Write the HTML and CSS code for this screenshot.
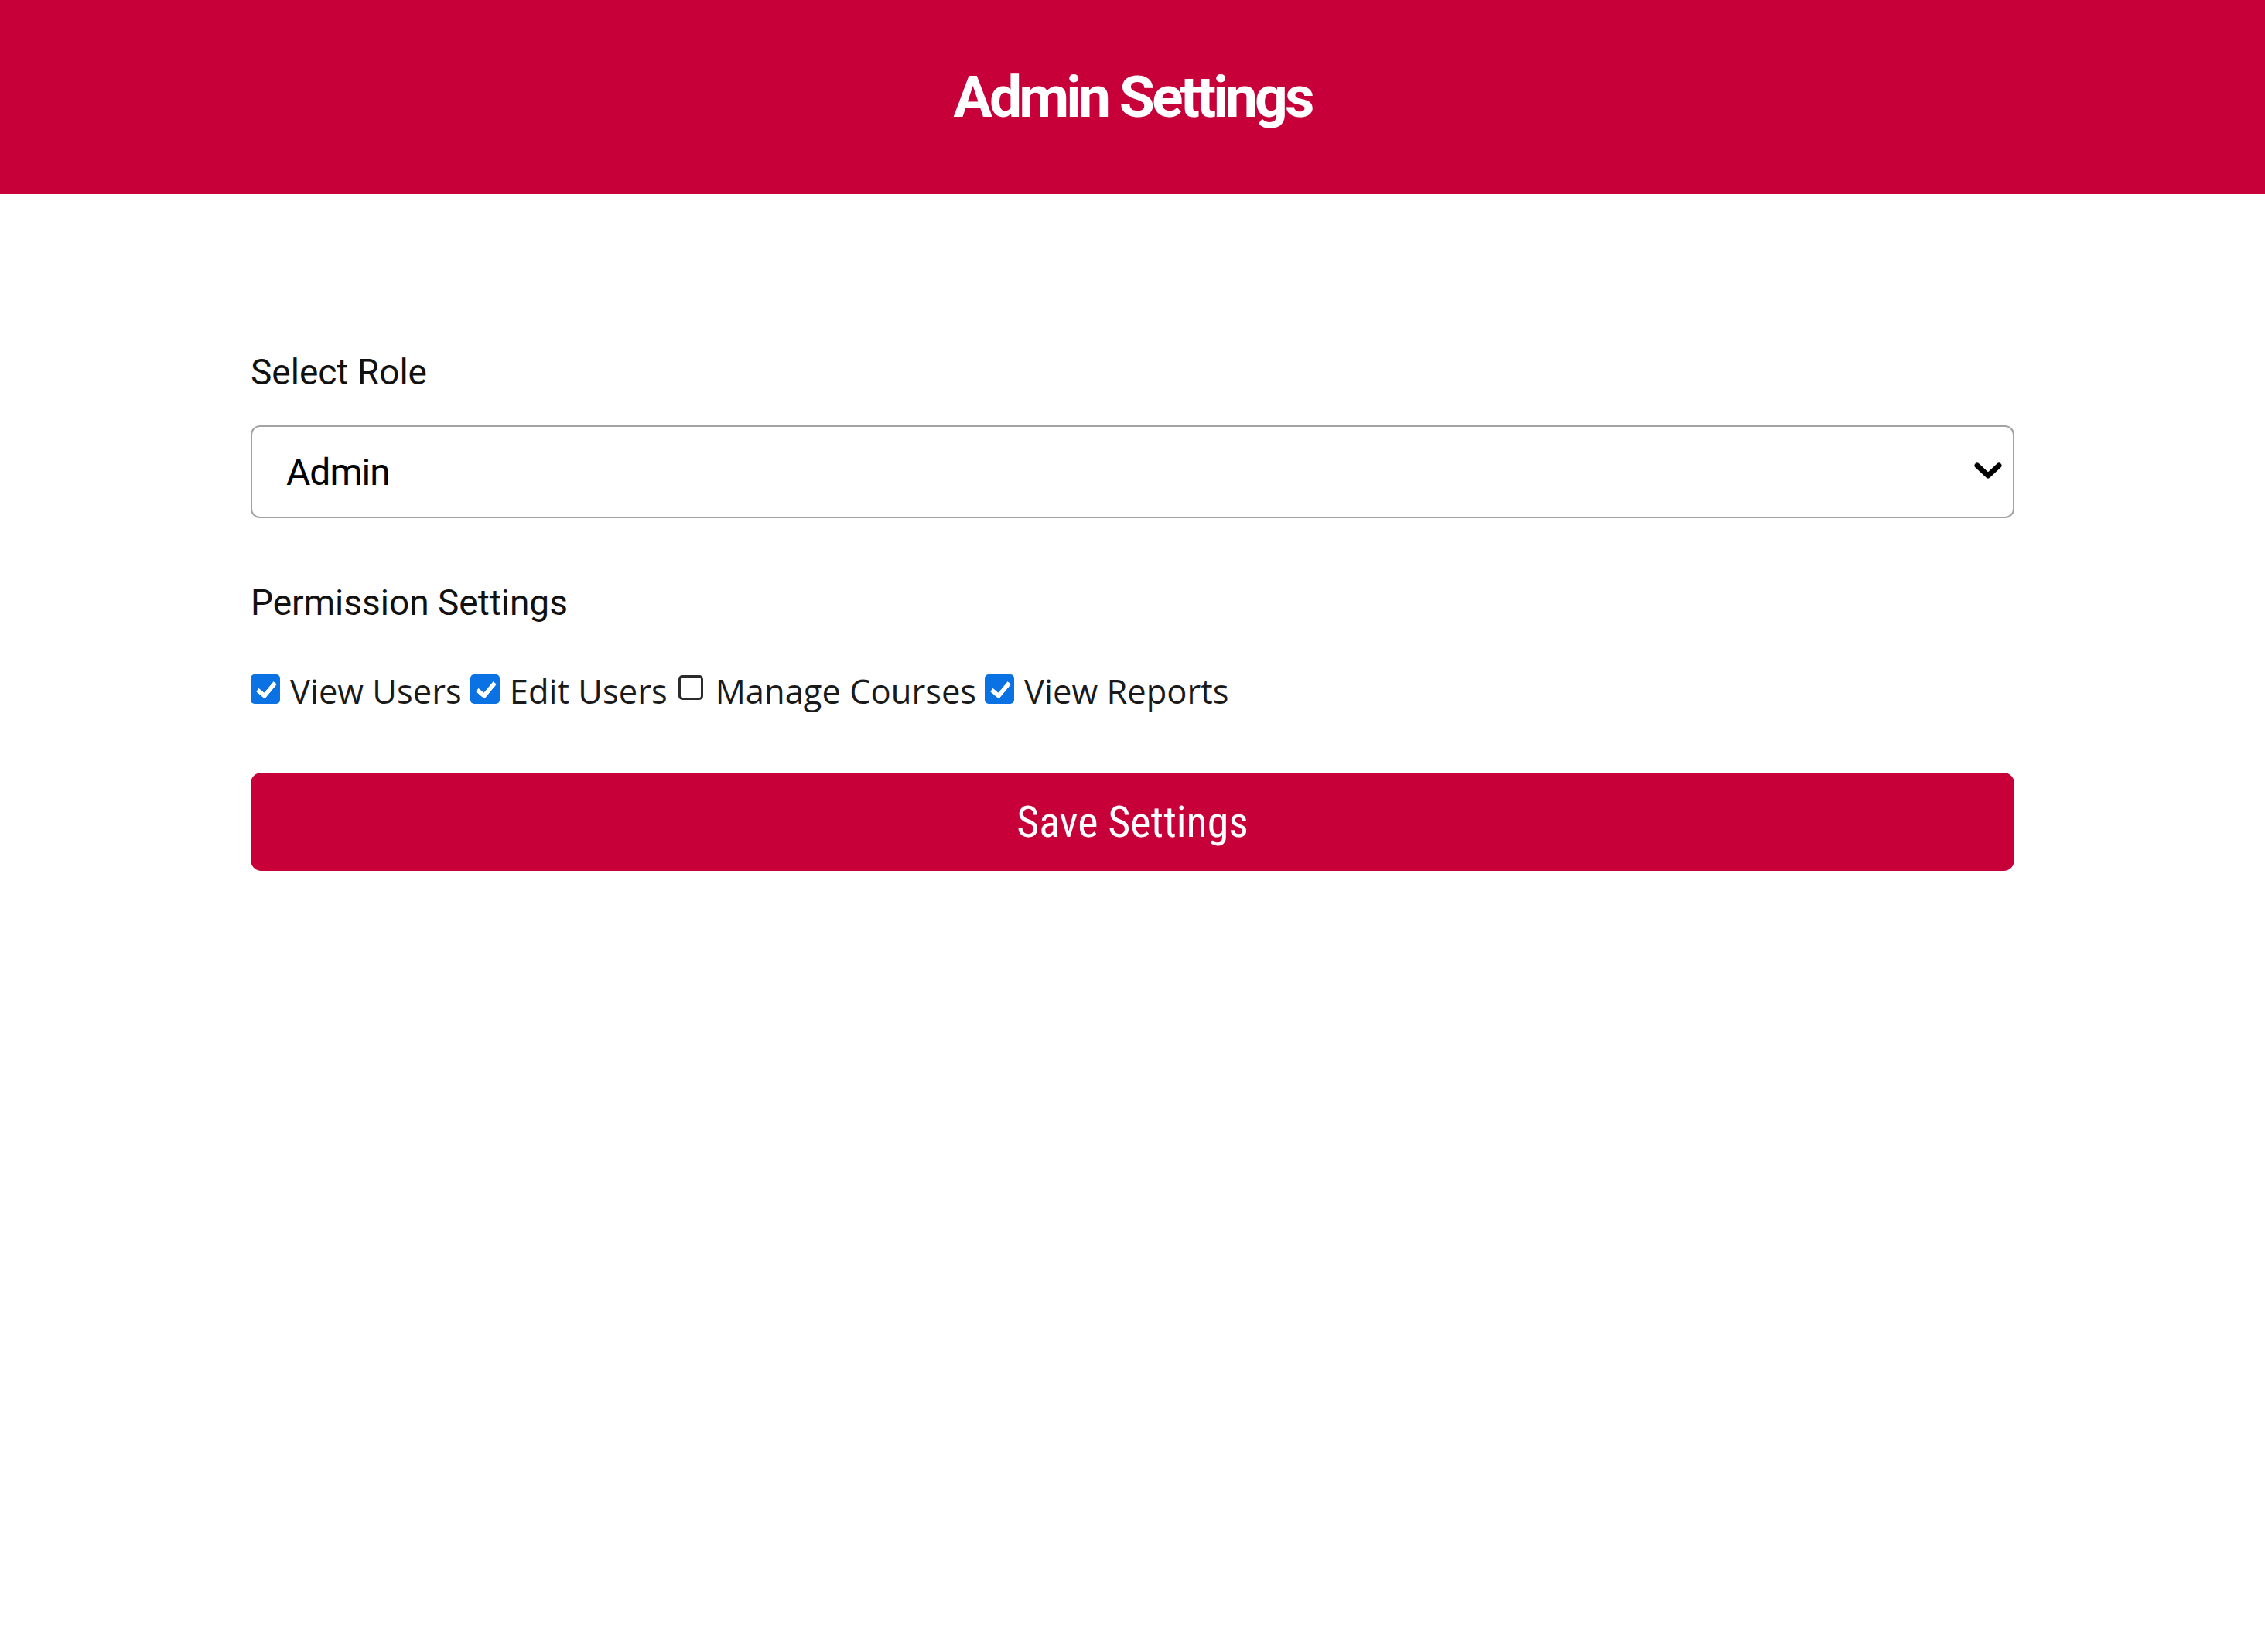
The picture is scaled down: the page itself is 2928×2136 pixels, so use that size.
FILE: index.html
```html
<!DOCTYPE html>
<html lang="en">
<head>
<meta charset="utf-8">
<title>Admin Settings</title>
<link rel="stylesheet" href="styles.css">
</head>
<body>
<header class="topbar">
  <h1 class="title">Admin Settings</h1>
</header>
<main class="content">
  <label class="field-label" for="role">Select Role</label>
  <div class="select-wrap">
    <select class="role-select" id="role">
      <option>Admin</option>
      <option>Instructor</option>
      <option>Student</option>
    </select>
    <svg class="chevron" viewBox="0 0 36 24" width="36" height="24" aria-hidden="true">
      <path d="M4 5 L18 18 L32 5" fill="none" stroke="#000" stroke-width="7" stroke-linecap="round" stroke-linejoin="round"/>
    </svg>
  </div>
  <h2 class="section-label">Permission Settings</h2>
  <div class="perms">
    <label class="perm"><input class="check" type="checkbox" checked><span>View Users</span></label>
    <label class="perm"><input class="check" type="checkbox" checked><span>Edit Users</span></label>
    <label class="perm"><input class="check" type="checkbox"><span>Manage Courses</span></label>
    <label class="perm"><input class="check" type="checkbox" checked><span>View Reports</span></label>
  </div>
  <button class="save-btn" type="button">Save Settings</button>
</main>
</body>
</html>
```
FILE: styles.css
```css
html, body {
  margin: 0;
  padding: 0;
  background: #ffffff;
}

body {
  font-family: "Open Sans", "Noto Sans", sans-serif;
  color: #111;
}

.topbar {
  height: 251px;
  background: #c7003a;
  display: flex;
  align-items: center;
  justify-content: center;
}

.title {
  margin: 0;
  font-family: Roboto, "Liberation Sans", sans-serif;
  font-weight: 700;
  font-size: 75px;
  letter-spacing: -4px;
  color: #ffffff;
  line-height: 1;
}

.content {
  width: 2280px;
  margin: 0 auto;
  padding-top: 203px;
  display: flex;
  flex-direction: column;
}

.field-label,
.section-label {
  display: block;
  margin: 0;
  font-family: Roboto, "Liberation Sans", sans-serif;
  font-weight: 400;
  font-size: 46px;
  line-height: 55px;
  color: #111;
}

.select-wrap {
  position: relative;
  margin-top: 41px;
}

.role-select {
  display: block;
  width: 100%;
  height: 120px;
  box-sizing: border-box;
  appearance: none;
  -webkit-appearance: none;
  background: #fff;
  border: 2px solid #a3a3a3;
  border-radius: 12px;
  padding: 0 100px 0 44px;
  font-family: Roboto, "Liberation Sans", sans-serif;
  font-size: 48px;
  letter-spacing: -1px;
  color: #000;
  outline: none;
}

.chevron {
  position: absolute;
  right: 16px;
  top: 47px;
  pointer-events: none;
}

.section-label {
  margin-top: 82px;
}

.perms {
  margin-top: 60px;
  display: flex;
  align-items: center;
  gap: 11px;
  font-family: "Open Sans", "Noto Sans", sans-serif;
  font-size: 43.5px;
  line-height: 54px;
  color: #1a1a1a;
}

.perm {
  display: flex;
  align-items: center;
  gap: 13px;
}

.check {
  appearance: none;
  -webkit-appearance: none;
  position: relative;
  box-sizing: border-box;
  width: 38px;
  height: 38px;
  margin: 0 0 7px 0;
  border-radius: 5px;
  background: #0b72e4;
  border: none;
  flex: none;
}

.check:checked::after {
  content: "";
  position: absolute;
  left: 13px;
  top: 5px;
  width: 9px;
  height: 19px;
  border-right: 6px solid #fff;
  border-bottom: 6px solid #fff;
  border-radius: 2px;
  transform: rotate(40deg);
}

.check:not(:checked) {
  width: 32px;
  height: 32px;
  margin: 0 3px 10px 3px;
  background: #fff;
  border: 3px solid #2b2b2b;
  border-radius: 5px;
}

.save-btn {
  margin-top: 78px;
  height: 127px;
  width: 100%;
  border: none;
  border-radius: 14px;
  background: #c7003a;
  color: #fff;
  font-family: "Liberation Sans Narrow", "Roboto Condensed", "DejaVu Sans Condensed", sans-serif;
  font-size: 56px;
  cursor: pointer;
}
```
